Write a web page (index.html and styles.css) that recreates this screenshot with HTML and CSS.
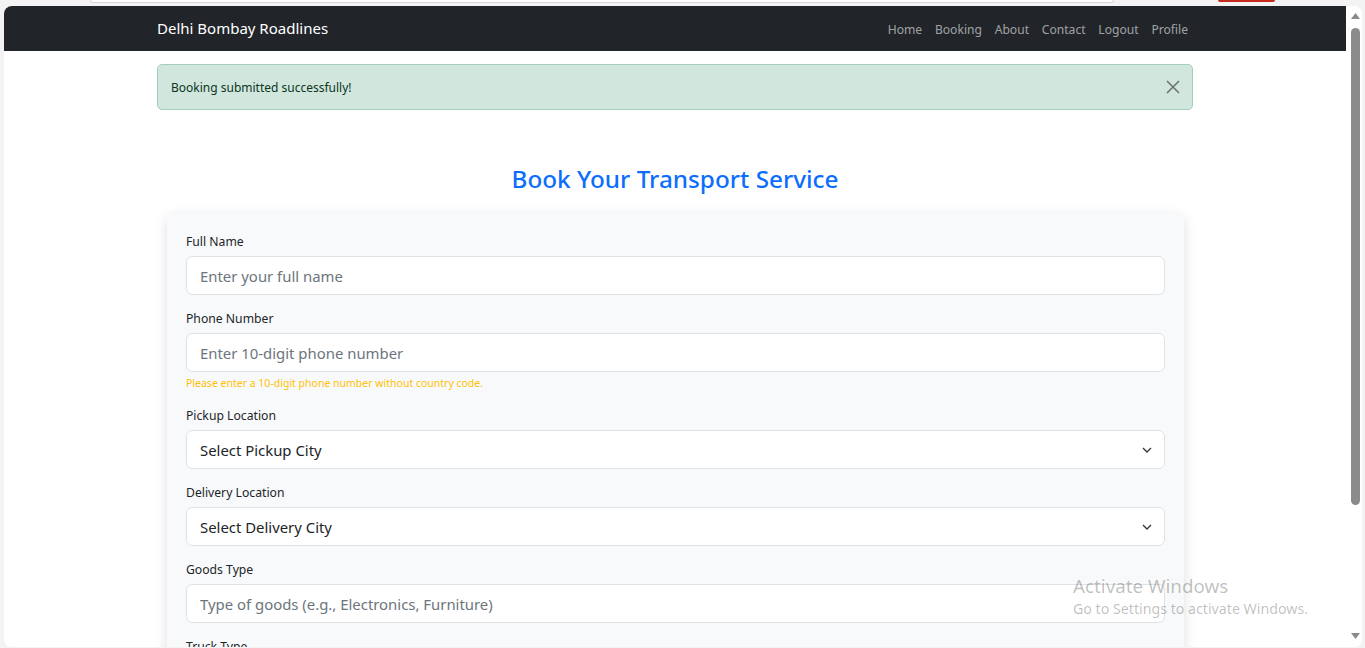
FILE: index.html
```html
<!DOCTYPE html>
<html lang="en">
<head>
<meta charset="utf-8">
<title>Book Your Transport Service</title>
<link rel="stylesheet" href="styles.css">
</head>
<body>
<div class="frame">
  <div class="chrome">
    <div class="addr"></div>
    <div class="rec"></div>
  </div>
  <div class="window">
    <div class="page">
      <nav class="navbar">
        <div class="container nav-inner">
          <a class="brand" href="#">Delhi Bombay Roadlines</a>
          <ul class="nav">
            <li><a href="#">Home</a></li>
            <li><a href="#">Booking</a></li>
            <li><a href="#">About</a></li>
            <li><a href="#">Contact</a></li>
            <li><a href="#">Logout</a></li>
            <li><a href="#">Profile</a></li>
          </ul>
        </div>
      </nav>
      <div class="container">
        <div class="alert">
          <span>Booking submitted successfully!</span>
          <button class="close" type="button" aria-label="Close">
            <svg width="14" height="14" viewBox="0 0 14 14"><path d="M1 1L13 13M13 1L1 13" stroke="#6b7470" stroke-width="1.6" fill="none"/></svg>
          </button>
        </div>
      </div>
      <div class="container main">
        <h2 class="title">Book Your Transport Service</h2>
        <form class="card">
          <div class="group">
            <label>Full Name</label>
            <div class="field placeholder">Enter your full name</div>
          </div>
          <div class="group">
            <label>Phone Number</label>
            <div class="field placeholder">Enter 10-digit phone number</div>
            <div class="help">Please enter a 10-digit phone number without country code.</div>
          </div>
          <div class="group group-after-help">
            <label>Pickup Location</label>
            <div class="field select">Select Pickup City
              <svg class="chev" width="10" height="6" viewBox="0 0 10 6"><path d="M1 1L5 5L9 1" stroke="#343a40" stroke-width="1.4" fill="none"/></svg>
            </div>
          </div>
          <div class="group">
            <label>Delivery Location</label>
            <div class="field select">Select Delivery City
              <svg class="chev" width="10" height="6" viewBox="0 0 10 6"><path d="M1 1L5 5L9 1" stroke="#343a40" stroke-width="1.4" fill="none"/></svg>
            </div>
          </div>
          <div class="group">
            <label>Goods Type</label>
            <div class="field placeholder">Type of goods (e.g., Electronics, Furniture)</div>
          </div>
          <div class="group">
            <label>Truck Type</label>
            <div class="field select">Select Truck Type</div>
          </div>
        </form>
      </div>
    </div>
    <div class="scrollbar">
      <svg class="arrow" width="9" height="6" viewBox="0 0 9 6"><path d="M0 6L4.5 0L9 6Z" fill="#8b8b8b"/></svg>
      <div class="thumb"></div>
      <div class="track-rest"></div>
      <svg class="arrow" width="9" height="6" viewBox="0 0 9 6"><path d="M0 0L4.5 6L9 0Z" fill="#8b8b8b"/></svg>
    </div>
  </div>
  <div class="watermark">
    <div class="wm-title">Activate Windows</div>
    <div class="wm-sub">Go to Settings to activate Windows.</div>
  </div>
</div>
</body>
</html>
```
FILE: styles.css
```css
* { box-sizing: border-box; }
html, body {
  margin: 0;
  padding: 0;
  width: 1365px;
  height: 648px;
  overflow: hidden;
  background: #f3f3f3;
  font-family: "Noto Sans", "Open Sans", sans-serif;
  color: #212529;
}
.frame {
  position: relative;
  width: 1365px;
  height: 648px;
}
.chrome {
  height: 6px;
  display: flex;
  align-items: flex-start;
}
.addr {
  margin-left: 90px;
  width: 1024px;
  height: 3px;
  border: 1px solid #d6d6d6;
  border-top: none;
  border-radius: 0 0 6px 6px;
  background: #ffffff;
}
.rec {
  margin-left: 104px;
  width: 57px;
  height: 2px;
  background: #c42b1c;
  border-radius: 0 0 2px 2px;
}
.window {
  margin-left: 4px;
  width: 1358px;
  height: 641px;
  background: #ffffff;
  border-radius: 8px;
  overflow: hidden;
  display: flex;
}
.page {
  width: 1345px;
  height: 641px;
  overflow: hidden;
  padding-right: 3px;
}
.container {
  width: 1036px;
  margin: 0 auto;
}
.navbar {
  background: #212529;
  height: 45px;
}
.nav-inner {
  height: 45px;
  display: flex;
  align-items: center;
  justify-content: space-between;
}
.brand {
  color: #ffffff;
  font-size: 15px;
  text-decoration: none;
  line-height: 22px;
  margin-bottom: 1px;
}
.nav {
  list-style: none;
  margin: 0;
  padding: 0;
  display: flex;
  padding-top: 1px;
}
.nav a {
  display: block;
  padding: 0 6.4px;
  font-size: 12.1px;
  color: rgba(255, 255, 255, 0.58);
  text-decoration: none;
  line-height: 19px;
}
.nav li:last-child a {
  padding-right: 5px;
}
.alert {
  margin-top: 13px;
  height: 46px;
  background: #d1e7dd;
  border: 1px solid #a3cfbb;
  border-radius: 5px;
  color: #0a3622;
  font-size: 12px;
  display: flex;
  align-items: center;
  justify-content: space-between;
  padding: 0 12px 0 13px;
}
.close {
  border: none;
  background: transparent;
  padding: 0;
  width: 14px;
  height: 14px;
  display: flex;
  cursor: pointer;
}
.main {
  padding-top: 54px;
}
.title {
  margin: 0 0 17px 0;
  text-align: center;
  color: #0d6efd;
  font-size: 24.3px;
  font-weight: 500;
  line-height: 30px;
}
.card {
  margin: 0 9px 0 10px;
  background: #f8f9fa;
  border-radius: 6px;
  box-shadow: 0 6px 13px rgba(0, 0, 0, 0.13);
  padding: 21px 19px 19px 19px;
}
.group {
  margin-bottom: 14px;
}
.group-after-help {
  margin-top: 15px;
}
label {
  display: block;
  font-size: 12.2px;
  line-height: 19px;
  margin-bottom: 5px;
  color: #212529;
}
.field {
  height: 39px;
  background: #ffffff;
  border: 1px solid #dee2e6;
  border-radius: 6.4px;
  font-size: 14.9px;
  padding: 0 13px;
  display: flex;
  align-items: center;
  justify-content: space-between;
}
.placeholder {
  color: #6c757d;
}
.select {
  color: #212529;
}
.chev {
  margin-right: -1px;
}
.help {
  margin-top: 3px;
  font-size: 10.5px;
  line-height: 16px;
  color: #ffc107;
}
.scrollbar {
  width: 13px;
  height: 641px;
  background: #ffffff;
  display: flex;
  flex-direction: column;
  align-items: center;
  padding-top: 7px;
  padding-bottom: 8px;
}
.arrow {
  flex: none;
}
.thumb {
  margin-top: 9px;
  width: 9px;
  height: 477px;
  background: #8b8b8b;
  border-radius: 4.5px;
  flex: none;
}
.track-rest {
  flex: 1;
}
.watermark {
  position: absolute;
  left: 1073px;
  top: 574px;
  color: rgba(0, 0, 0, 0.26);
  pointer-events: none;
}
.wm-title {
  font-size: 18.8px;
  line-height: 24px;
}
.wm-sub {
  font-size: 14.2px;
  line-height: 21px;
}
```
